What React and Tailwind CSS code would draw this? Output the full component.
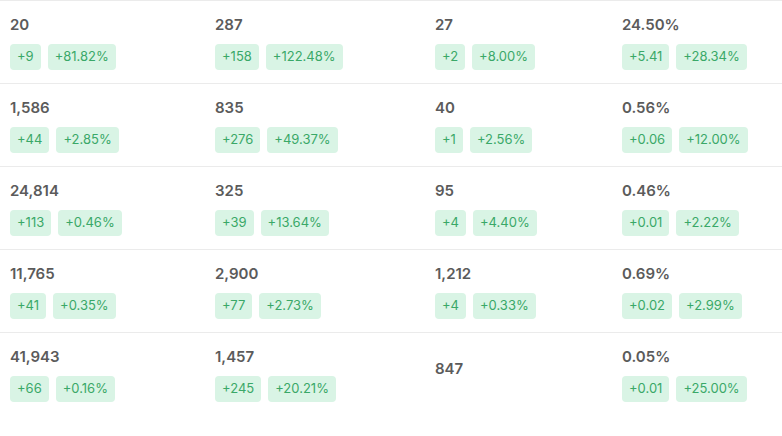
import React from "react";

const rows = [
  [
    { value: "20", badges: ["+9", "+81.82%"] },
    { value: "287", badges: ["+158", "+122.48%"] },
    { value: "27", badges: ["+2", "+8.00%"] },
    { value: "24.50%", badges: ["+5.41", "+28.34%"] },
  ],
  [
    { value: "1,586", badges: ["+44", "+2.85%"] },
    { value: "835", badges: ["+276", "+49.37%"] },
    { value: "40", badges: ["+1", "+2.56%"] },
    { value: "0.56%", badges: ["+0.06", "+12.00%"] },
  ],
  [
    { value: "24,814", badges: ["+113", "+0.46%"] },
    { value: "325", badges: ["+39", "+13.64%"] },
    { value: "95", badges: ["+4", "+4.40%"] },
    { value: "0.46%", badges: ["+0.01", "+2.22%"] },
  ],
  [
    { value: "11,765", badges: ["+41", "+0.35%"] },
    { value: "2,900", badges: ["+77", "+2.73%"] },
    { value: "1,212", badges: ["+4", "+0.33%"] },
    { value: "0.69%", badges: ["+0.02", "+2.99%"] },
  ],
  [
    { value: "41,943", badges: ["+66", "+0.16%"] },
    { value: "1,457", badges: ["+245", "+20.21%"] },
    { value: "847", badges: [] },
    { value: "0.05%", badges: ["+0.01", "+25.00%"] },
  ],
];

const Cell = ({ cell }) => {
  if (cell.badges.length === 0) {
    // no change data, value sits a bit lower
    return (
      <div className="pl-[10px] pt-[26px]">
        <div className="text-[15px] leading-5 font-semibold text-[#5b5b5b]">{cell.value}</div>
      </div>
    );
  }
  return (
    <div className="pl-[10px] pt-[14px] pb-[13px]">
      <div className="text-[15px] leading-5 font-semibold text-[#5b5b5b]">{cell.value}</div>
      <div className="flex gap-[7px] mt-[9px]">
        {cell.badges.map((b, i) => (
          <span
            key={i}
            className="h-[26px] px-[7px] rounded flex items-center bg-[#d9f4e5] text-[13px] text-[#3aa868]"
          >
            {b}
          </span>
        ))}
      </div>
    </div>
  );
};

export default function App() {
  return (
    <div
      className="w-[782px] h-[436px] bg-white overflow-hidden"
      style={{ fontFamily: "Inter, 'Noto Sans', sans-serif" }}
    >
      {rows.map((row, r) => (
        <div
          key={r}
          className="grid grid-cols-[205px_220px_187px_1fr] border-t border-[#ebebeb] h-[83px]"
        >
          {row.map((cell, c) => (
            <Cell key={c} cell={cell} />
          ))}
        </div>
      ))}
    </div>
  );
}
